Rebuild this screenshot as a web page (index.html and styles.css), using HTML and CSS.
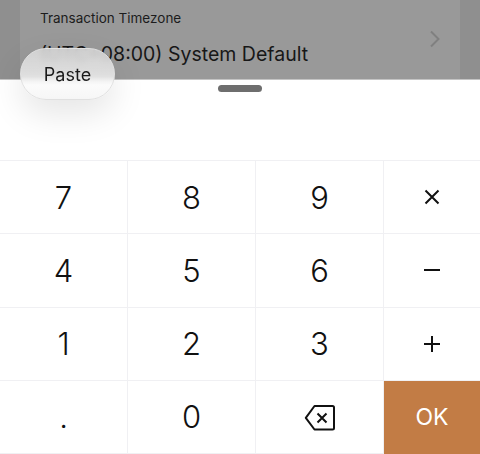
FILE: index.html
```html
<!DOCTYPE html>
<html lang="en">
<head>
<meta charset="utf-8">
<title>Keypad</title>
<link rel="stylesheet" href="styles.css">
</head>
<body>
<div class="screen">
  <div class="backdrop">
    <div class="card">
      <div class="card-text">
        <div class="label">Transaction Timezone</div>
        <div class="value">(UTC+08:00) System Default</div>
      </div>
      <svg class="chevron" width="12" height="18" viewBox="0 0 12 18"><path d="M2 1.500L9.500 9L2 16.500" fill="none" stroke="#808080" stroke-width="2"/></svg>
    </div>
  </div>
  <div class="sheet-head"><div class="handle"></div></div>
  <div class="keypad">
    <div class="key">7</div><div class="key">8</div><div class="key">9</div>
    <div class="key key-op"><svg width="16" height="16" viewBox="0 0 16 16"><path d="M1.500 1.500L14.500 14.500M14.500 1.500L1.500 14.500" stroke="#111" stroke-width="2" fill="none"/></svg></div>
    <div class="key">4</div><div class="key">5</div><div class="key">6</div>
    <div class="key key-op"><svg width="18" height="4" viewBox="0 0 18 4"><path d="M1 2H17" stroke="#111" stroke-width="2"/></svg></div>
    <div class="key">1</div><div class="key">2</div><div class="key">3</div>
    <div class="key key-op"><svg width="18" height="18" viewBox="0 0 18 18"><path d="M1 9H17M9 1V17" stroke="#111" stroke-width="2" fill="none"/></svg></div>
    <div class="key">.</div><div class="key">0</div>
    <div class="key"><svg width="32" height="28" viewBox="0 0 32 28"><path d="M10.500 3H28.500Q30 3 30 4.500V25Q30 26.500 28.500 26.500H10.500L1.800 14.800Z" fill="none" stroke="#111" stroke-width="2" stroke-linejoin="round"/><path d="M13.500 10.500L22.500 19.500M22.500 10.500L13.500 19.500" stroke="#111" stroke-width="2" fill="none"/></svg></div>
    <div class="key key-ok">OK</div>
  </div>
  <div class="paste">Paste</div>
</div>
</body>
</html>
```
FILE: styles.css
```css
* { box-sizing: border-box; }
html, body { margin: 0; padding: 0; }
body { font-family: Inter, "Liberation Sans", sans-serif; background: #fff; }
.screen { position: relative; width: 480px; height: 454px; overflow: hidden; display: flex; flex-direction: column; }
.backdrop { height: 80px; background: #8f8f8f; padding: 0 20px; border-bottom: 1px solid #c4c4c4; overflow: hidden; flex: none; }
.card { height: 79px; background: #999; padding: 10px 20px 0; display: flex; justify-content: space-between; }
.label { font-size: 13.500px; line-height: 16px; color: #1c1c1c; }
.value { font-size: 19.500px; line-height: 24px; color: #171717; margin-top: 16px; white-space: nowrap; }
.chevron { margin: 20px -1px 0 0; }
.sheet-head { height: 81px; flex: none; display: flex; justify-content: center; align-items: flex-start; padding-top: 5px; border-bottom: 1px solid #f0f0f3; }
.handle { width: 44px; height: 7px; border-radius: 4px; background: #6e6e6e; }
.keypad { flex: 1; display: grid; grid-template-columns: 128px 128px 128px 96px; grid-template-rows: repeat(4, 1fr); }
.key { display: flex; align-items: center; justify-content: center; font-size: 31px; font-weight: 300; color: #111; border-right: 1px solid #f0f0f3; border-bottom: 1px solid #f0f0f3; }
.key:nth-child(4n) { border-right: 0; }
.key-ok { background: #c27c45; color: #fff; font-size: 23px; font-weight: 400; border: 0; }
.paste { position: absolute; left: 20px; top: 48px; width: 95px; height: 52px; border-radius: 26px; display: flex; align-items: center; justify-content: center; font-size: 18px; color: #1a1a1a; background: linear-gradient(to bottom, rgba(222,222,222,.82) 0%, rgba(232,232,232,.88) 55%, #fbfbfb 72%, #f6f6f6 100%); -webkit-backdrop-filter: blur(3px); backdrop-filter: blur(3px); border: 1px solid #e0e0e0; box-shadow: 0 14px 34px rgba(0,0,0,.1); }
```
